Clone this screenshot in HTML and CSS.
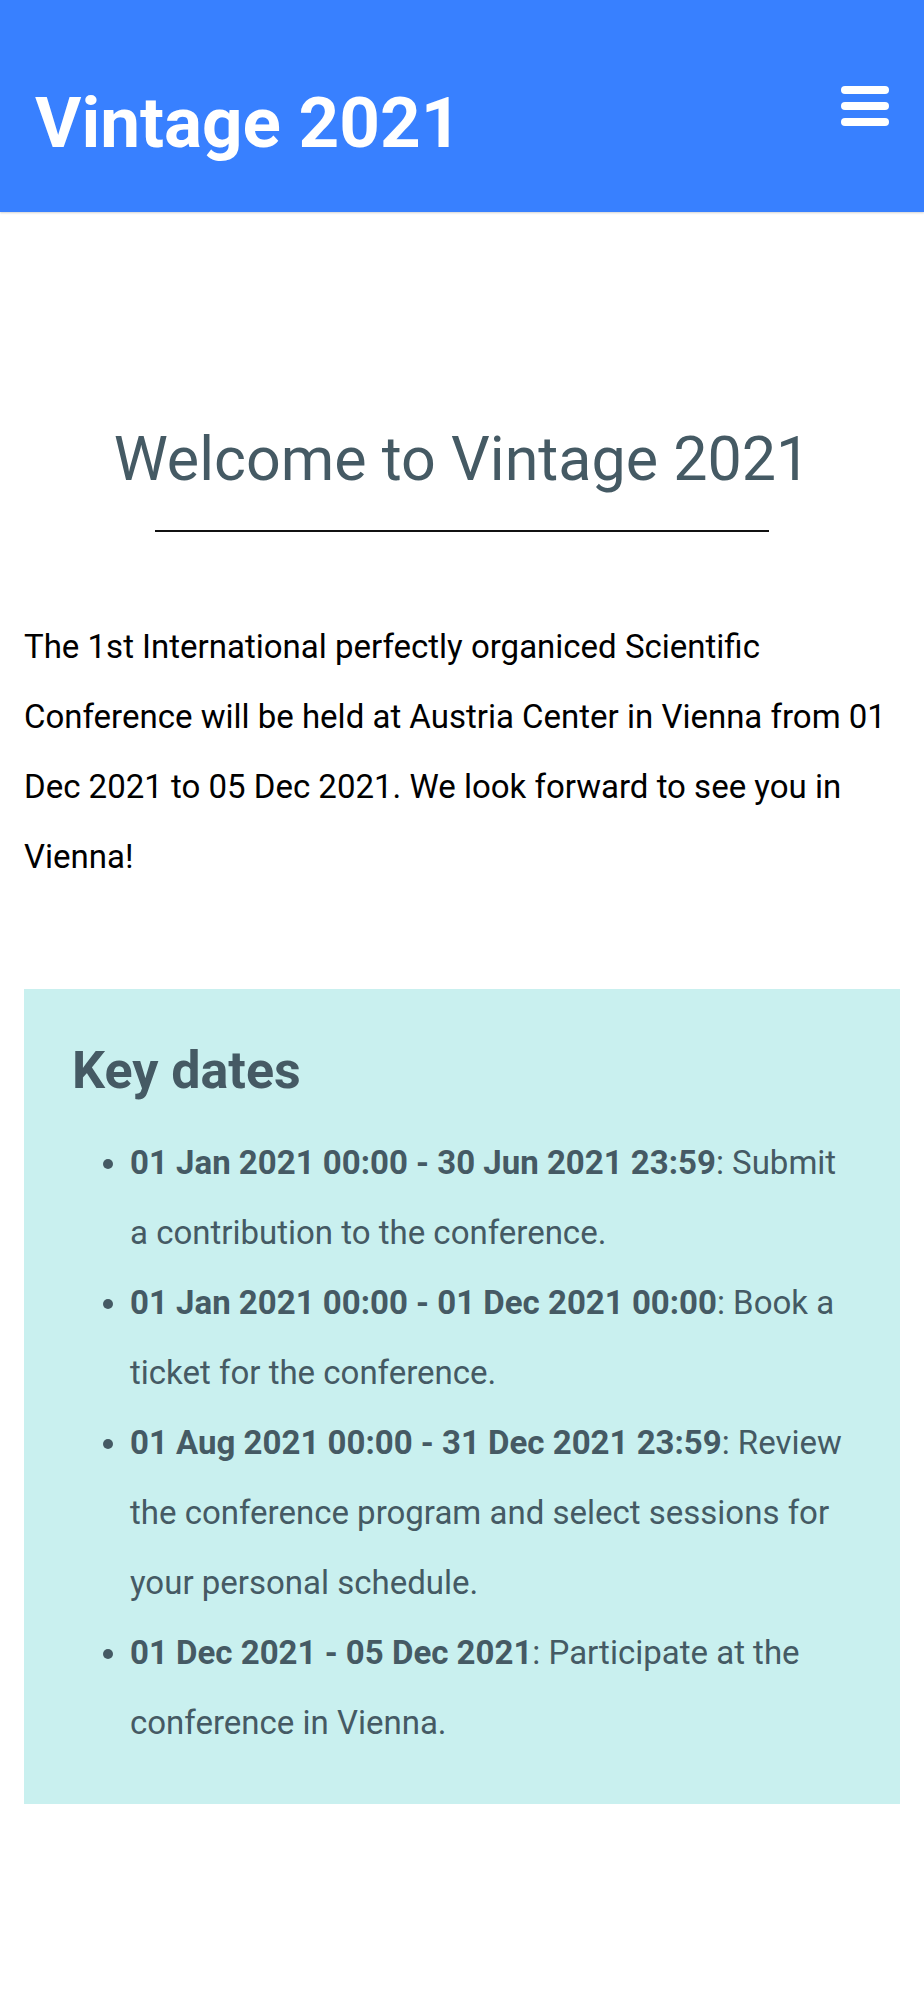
FILE: index.html
```html
<!DOCTYPE html>
<html lang="en">
<head>
    <meta charset="UTF-8">
    <meta name="viewport" content="width=device-width, initial-scale=1.0">
    <title>Vintage 2021</title>
    <link rel="stylesheet" href="styles.css">
</head>
<body>
    <header class="toolbar">
        <div class="toolbar-title">Vintage 2021</div>
        <button class="menu-button" aria-label="Menu">
            <span class="bar"></span>
            <span class="bar"></span>
            <span class="bar"></span>
        </button>
    </header>

    <main class="content">
        <h1 class="welcome-title">Welcome to Vintage 2021</h1>
        <hr class="title-rule">

        <p class="intro">The 1st International perfectly organiced Scientific Conference will be held at Austria Center in Vienna from 01 Dec 2021 to 05 Dec 2021. We look forward to see you in Vienna!</p>

        <section class="key-dates">
            <h2>Key dates</h2>
            <ul>
                <li><strong>01 Jan 2021 00:00 - 30 Jun 2021 23:59</strong>: Submit a contribution to the conference.</li>
                <li><strong>01 Jan 2021 00:00 - 01 Dec 2021 00:00</strong>: Book a ticket for the conference.</li>
                <li><strong>01 Aug 2021 00:00 - 31 Dec 2021 23:59</strong>: Review the conference program and select sessions for your personal schedule.</li>
                <li><strong>01 Dec 2021 - 05 Dec 2021</strong>: Participate at the conference in Vienna.</li>
            </ul>
        </section>
    </main>
</body>
</html>
```

FILE: styles.css
```css
:root {
    --primary-color: #3880ff;
    --text-muted: #455a64;
    --box-color: #c9f0ef;
}

body, html {
    margin: 0;
    font-family: Roboto, "Liberation Sans", Arial, sans-serif;
    background-color: #ffffff;
    color: #111111;
}

.toolbar {
    height: 212px;
    box-sizing: border-box;
    padding: 81px 35px 0 35px;
    background-color: var(--primary-color);
    display: flex;
    justify-content: space-between;
    align-items: flex-start;
    box-shadow: 0 1px 2px rgba(0, 0, 0, 0.18);
}

.toolbar-title {
    color: #ffffff;
    font-size: 71px;
    font-weight: bold;
    line-height: normal;
}

.menu-button {
    margin-top: 5px;
    padding: 0;
    border: none;
    background: none;
    width: 48px;
    display: flex;
    flex-direction: column;
    gap: 8px;
    cursor: pointer;
}

.menu-button .bar {
    display: block;
    height: 8px;
    width: 100%;
    background-color: #ffffff;
    border-radius: 4px;
}

.content {
    padding: 0 24px 100px 24px;
}

.welcome-title {
    margin: 211px 0 0 0;
    text-align: center;
    font-size: 61px;
    font-weight: 400;
    line-height: normal;
    color: var(--text-muted);
}

.title-rule {
    width: 70%;
    margin: 35px auto 0 auto;
    border: none;
    height: 2px;
    background-color: #111111;
}

.intro {
    margin: 80px 0 0 0;
    font-size: 33px;
    line-height: 70px;
    color: #000000;
}

.key-dates {
    margin-top: 97px;
    background-color: var(--box-color);
    padding: 51px 48px 12px 48px;
    color: var(--text-muted);
}

.key-dates h2 {
    margin: 0;
    font-size: 52px;
    font-weight: bold;
    line-height: normal;
}

.key-dates ul {
    margin: 27px 0 34px 0;
    padding-left: 58px;
    font-size: 33px;
    line-height: 70px;
}
```
